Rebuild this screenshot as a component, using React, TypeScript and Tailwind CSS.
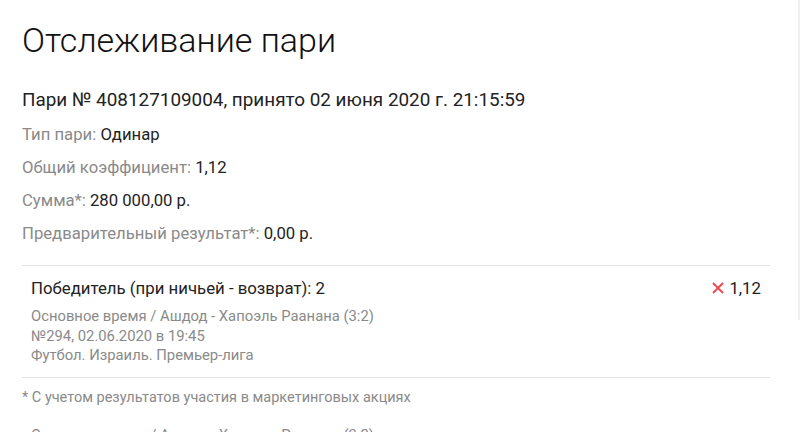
export default function App() {
  const rows: [string, string][] = [
    ["Тип пари:", "Одинар"],
    ["Общий коэффициент:", "1,12"],
    ["Сумма*:", "280 000,00 р."],
    ["Предварительный результат*:", "0,00 р."],
  ];
  return (
    <div
      className="w-[800px] h-[432px] overflow-hidden bg-white flex"
      style={{ fontFamily: "Roboto, 'Noto Sans', sans-serif" }}
    >
      <div className="flex-1 pl-[22px] pr-[28px]">
        <h1 className="text-[34px] leading-[44px] font-light text-[#111] mt-[18px]">
          Отслеживание пари
        </h1>
        <div className="mt-[26px] text-[18.9px] leading-[24px] text-[#222]">
          Пари № 408127109004, принято 02 июня 2020 г. 21:15:59
        </div>
        <div className="mt-[11px] flex flex-col gap-[9px]">
          {rows.map(([k, v]) => (
            <div key={k} className="text-[16.7px] leading-[24px]">
              <span className="text-[#8a8a8a]">{k}</span>{" "}
              <span className="text-[#222]">{v}</span>
            </div>
          ))}
        </div>
        <div className="mt-[19px] border-t border-[#e3e3e3]">
          <div className="px-[9px] pt-[11px] pb-[11px]">
            <div className="flex justify-between items-center text-[16.8px] leading-[22px] text-[#222]">
              <span>Победитель (при ничьей - возврат): 2</span>
              <span className="flex items-center gap-[4px]">
                <svg width="14" height="14" viewBox="0 0 14 14">
                  <path d="M2 2 L12 12 M12 2 L2 12" stroke="#f0454b" strokeWidth="1.8" />
                </svg>
                <span>1,12</span>
              </span>
            </div>
            <div className="mt-[8px] text-[14.8px] leading-[19.5px] text-[#8a8a8a]">
              <div>Основное время / Ашдод - Хапоэль Раанана (3:2)</div>
              <div>№294, 02.06.2020 в 19:45</div>
              <div>Футбол. Израиль. Премьер-лига</div>
            </div>
          </div>
        </div>
        <div className="border-t border-[#e3e3e3] pt-[10px] text-[14.5px] leading-[20px] text-[#8a8a8a]">
          * С учетом результатов участия в маркетинговых акциях
        </div>
        <div className="mt-[17px] pl-[9px] text-[14.8px] leading-[20px] text-[#8a8a8a]">
          Основное время / Ашдод - Хапоэль Раанана (3:2)
        </div>
      </div>
      <div className="w-[2px] h-[320px] bg-[#efefef]" />
    </div>
  );
}
